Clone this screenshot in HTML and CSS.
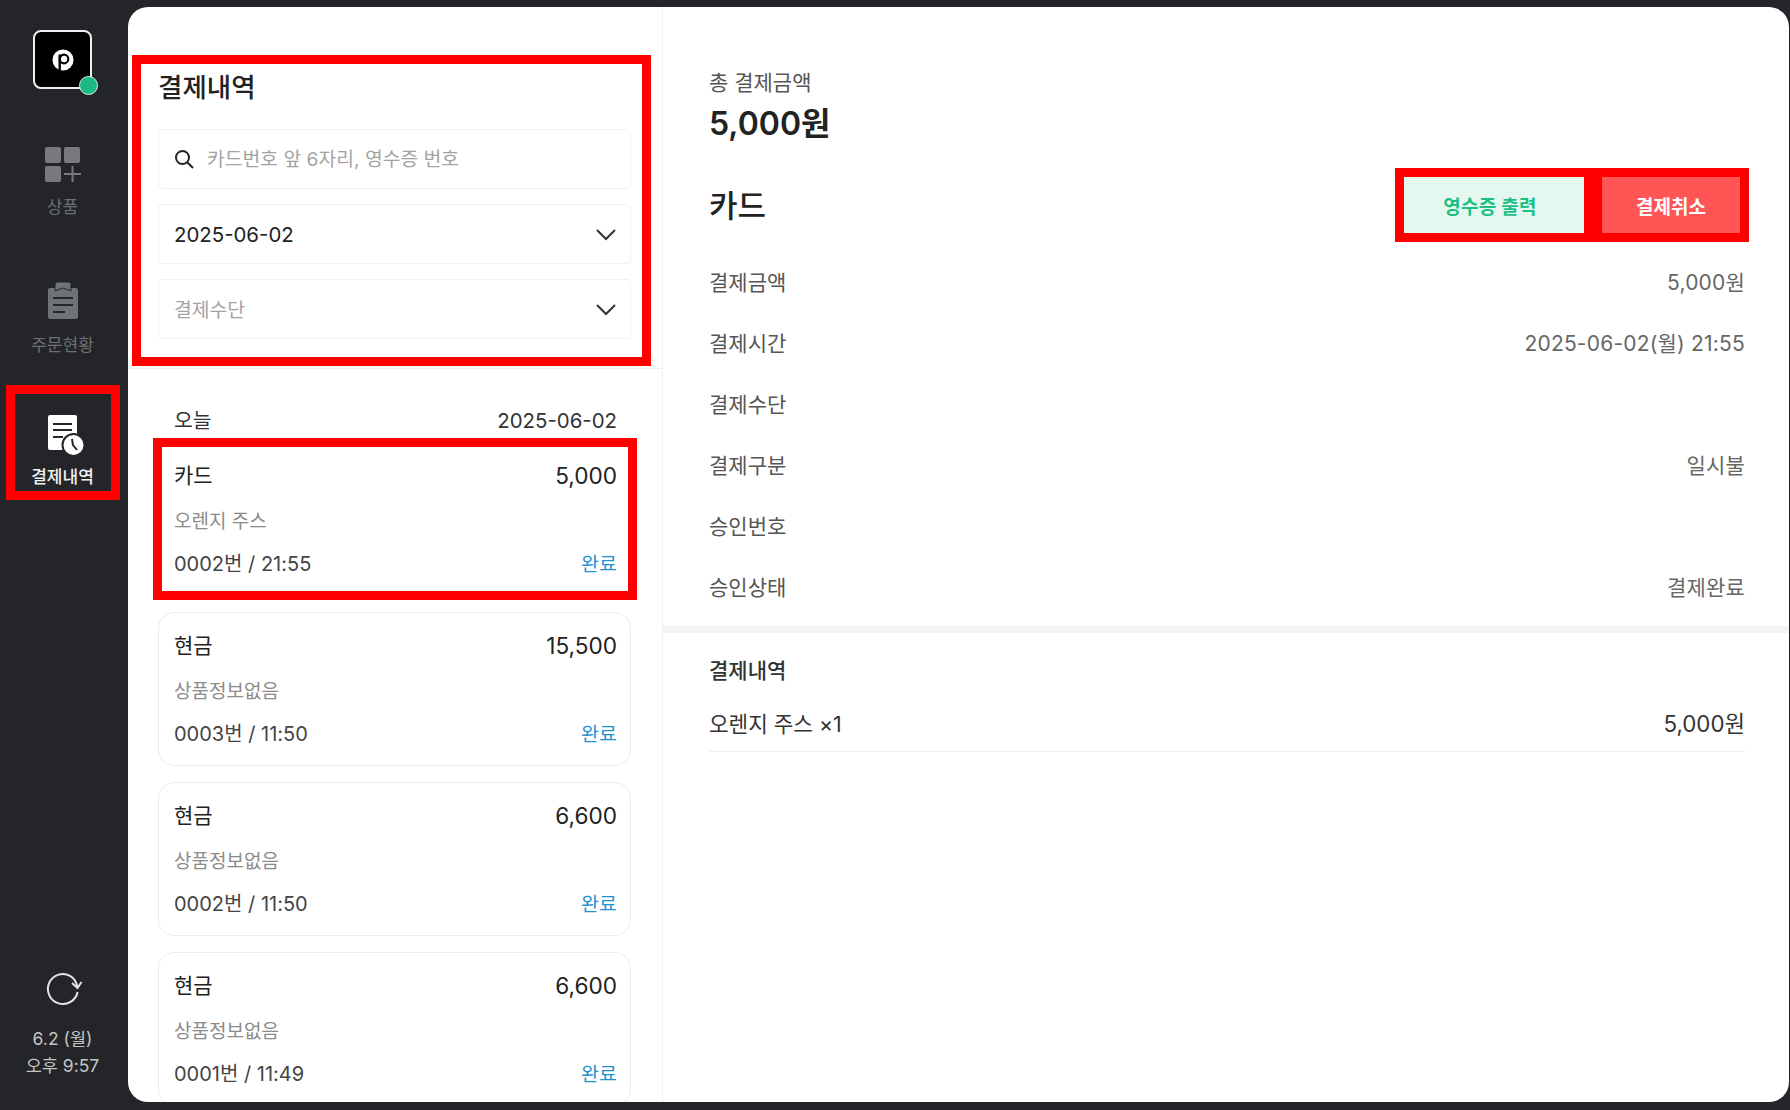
FILE: index.html
```html
<!DOCTYPE html>
<html lang="ko">
<head>
<meta charset="utf-8">
<title>결제내역</title>
<link rel="stylesheet" href="styles.css">
</head>
<body>
<div class="app">
  <aside class="sidebar">
    <div class="logo">
      <svg class="logo-mark" viewBox="0 0 24 24" width="24" height="24"><circle cx="12" cy="12" r="10.500" fill="#fff"/><circle cx="13" cy="11" r="4.300" fill="#fff" stroke="#000" stroke-width="2.200"/><path d="M8.700 6.500V24" stroke="#000" stroke-width="2.400" fill="none"/><path d="M3 24h4.500M10 24h11" stroke="#000" stroke-width="2" fill="none"/></svg>
      <span class="status-dot"></span>
    </div>
    <nav class="nav">
      <a class="nav-item nav-products">
        <svg viewBox="0 0 36 36" width="36" height="36"><rect x="0" y="0" width="16" height="16" rx="2" fill="#77797c"/><rect x="19" y="0" width="16" height="16" rx="2" fill="#77797c"/><rect x="0" y="19" width="16" height="16" rx="2" fill="#77797c"/><path d="M27.500 19v16M19 27h17" stroke="#77797c" stroke-width="2" fill="none"/></svg>
        <span class="nav-label">상품</span>
      </a>
      <a class="nav-item nav-orders">
        <svg viewBox="0 0 36 38" width="36" height="38"><path d="M5 6h26a2 2 0 0 1 2 2v27a2 2 0 0 1-2 2H5a2 2 0 0 1-2-2V8a2 2 0 0 1 2-2z" fill="#6f7276"/><path d="M10 9V2a2 2 0 0 1 2-2h12a2 2 0 0 1 2 2v7l-8-3z" fill="#6f7276" stroke="#24262a" stroke-width="1"/><path d="M8 16h20M8 23h20M8 30h12" stroke="#24262a" stroke-width="2" fill="none"/></svg>
        <span class="nav-label">주문현황</span>
      </a>
      <a class="nav-item nav-history">
        <svg viewBox="0 0 40 42" width="40" height="42"><rect x="0" y="0" width="29" height="35" rx="2" fill="#fff"/><path d="M5 9h19M5 15h19M5 22h10" stroke="#24262a" stroke-width="2" fill="none"/><circle cx="25.500" cy="30" r="11" fill="#fff" stroke="#24262a" stroke-width="2"/><path d="M24 24l1 6 4 5" stroke="#24262a" stroke-width="2" fill="none"/></svg>
        <span class="nav-label nav-label-active">결제내역</span>
      </a>
    </nav>
    <div class="side-foot">
      <svg class="refresh" viewBox="0 0 36 36" width="36" height="36"><path d="M32.600 21A15 15 0 1 1 25 4.800C29 7 31.500 11 32.500 16.500" fill="none" stroke="#e6e6e6" stroke-width="2"/><path d="M27 12l5.500 5 4-6" fill="none" stroke="#e6e6e6" stroke-width="2"/></svg>
      <div class="side-time">6.2 (월)</div>
      <div class="side-time">오후 9:57</div>
    </div>
  </aside>

  <main class="panel">
    <section class="list-col">
      <header class="list-head">
        <h1 class="list-title">결제내역</h1>
        <div class="field">
          <svg viewBox="0 0 20 20" width="20" height="20"><circle cx="8.500" cy="8.500" r="6.500" fill="none" stroke="#222" stroke-width="2"/><path d="M13.500 13.500L19 19" stroke="#222" stroke-width="2" fill="none"/></svg>
          <span class="placeholder search-text">카드번호 앞 6자리, 영수증 번호</span>
        </div>
        <div class="field field-select">
          <span class="field-value">2025-06-02</span>
          <svg viewBox="0 0 20 12" width="20" height="12"><path d="M1 1l9 9 9-9" fill="none" stroke="#333" stroke-width="2"/></svg>
        </div>
        <div class="field field-select">
          <span class="placeholder">결제수단</span>
          <svg viewBox="0 0 20 12" width="20" height="12"><path d="M1 1l9 9 9-9" fill="none" stroke="#333" stroke-width="2"/></svg>
        </div>
      </header>
      <div class="list-body">
        <div class="day-row"><span>오늘</span><span>2025-06-02</span></div>
        <article class="card card-marked">
          <div class="card-row card-top"><span>카드</span><span class="amount">5,000</span></div>
          <div class="card-sub">오렌지 주스</div>
          <div class="card-row card-bottom"><span>0002번 / 21:55</span><span class="done">완료</span></div>
        </article>
        <article class="card">
          <div class="card-row card-top"><span>현금</span><span class="amount">15,500</span></div>
          <div class="card-sub">상품정보없음</div>
          <div class="card-row card-bottom"><span>0003번 / 11:50</span><span class="done">완료</span></div>
        </article>
        <article class="card">
          <div class="card-row card-top"><span>현금</span><span class="amount">6,600</span></div>
          <div class="card-sub">상품정보없음</div>
          <div class="card-row card-bottom"><span>0002번 / 11:50</span><span class="done">완료</span></div>
        </article>
        <article class="card">
          <div class="card-row card-top"><span>현금</span><span class="amount">6,600</span></div>
          <div class="card-sub">상품정보없음</div>
          <div class="card-row card-bottom"><span>0001번 / 11:49</span><span class="done">완료</span></div>
        </article>
      </div>
    </section>

    <section class="detail">
      <div class="detail-top">
        <div class="total-label">총 결제금액</div>
        <div class="total-value">5,000원</div>
        <div class="method-row">
          <div class="method">카드</div>
          <div class="actions">
            <button class="btn btn-receipt">영수증 출력</button>
            <button class="btn btn-cancel">결제취소</button>
          </div>
        </div>
        <dl class="info">
          <div class="info-row"><dt>결제금액</dt><dd>5,000원</dd></div>
          <div class="info-row"><dt>결제시간</dt><dd>2025-06-02(월) 21:55</dd></div>
          <div class="info-row"><dt>결제수단</dt><dd></dd></div>
          <div class="info-row"><dt>결제구분</dt><dd>일시불</dd></div>
          <div class="info-row"><dt>승인번호</dt><dd></dd></div>
          <div class="info-row"><dt>승인상태</dt><dd>결제완료</dd></div>
        </dl>
      </div>
      <div class="detail-items">
        <h2 class="items-title">결제내역</h2>
        <div class="item-row"><span>오렌지 주스 ×1</span><span class="item-price">5,000원</span></div>
      </div>
    </section>
  </main>
</div>
</body>
</html>
```

FILE: styles.css
```css
*, *::before, *::after { box-sizing: border-box; }
html, body { margin: 0; padding: 0; height: 100%; }
body {
  background: #232528;
  font-family: Inter, "Noto Sans CJK KR", sans-serif;
  color: #222;
  overflow: hidden;
}
.app { display: flex; width: 1790px; height: 1110px; }

/* sidebar */
.sidebar {
  width: 128px;
  flex: none;
  display: flex;
  flex-direction: column;
  align-items: center;
  padding: 30px 3px 31px 0;
}
.logo {
  position: relative;
  width: 59px;
  height: 59px;
  background: #000;
  border: 2px solid #eee;
  border-radius: 8px;
  display: flex;
  align-items: center;
  justify-content: center;
}
.status-dot {
  position: absolute;
  right: -8px;
  bottom: -8px;
  width: 19px;
  height: 19px;
  border-radius: 50%;
  background: #1db983;
  border: 1.5px solid #d5efe6;
}
.nav { display: flex; flex-direction: column; align-items: center; }
.nav-item { display: flex; flex-direction: column; align-items: center; }
.nav-products { margin-top: 58px; }
.nav-orders { margin-top: 63px; }
.nav-history {
  margin-top: 28px;
  width: 114px;
  height: 115px;
  border: 9px solid #f00;
  padding-top: 21px;
}
.nav-label {
  font-size: 17px;
  line-height: 24px;
  color: #6d7074;
  margin-top: 12px;
}
.nav-orders .nav-label { margin-top: 13px; }
.nav-label-active { color: #f2f2f2; font-weight: 500; margin-top: 8px; white-space: nowrap; }
.nav-history svg { margin-left: 11px; height: 42px; flex: none; }
.side-foot {
  margin-top: auto;
  display: flex;
  flex-direction: column;
  align-items: center;
}
.refresh { margin-bottom: 18px; overflow: visible; }
.side-time { font-size: 17.5px; line-height: 27px; color: #c4c4c4; white-space: nowrap; }

/* panel */
.panel {
  flex: 1;
  margin: 7px 1px 8px 0;
  background: #fff;
  border-radius: 20px;
  overflow: hidden;
  display: flex;
}

/* list column */
.list-col {
  width: 535px;
  flex: none;
  border-right: 1px solid #efefef;
  display: flex;
  flex-direction: column;
}
.list-head {
  position: relative;
  padding: 65px 31px 29px 30px;
  border-bottom: 1px solid #efefef;
}
.list-head::after {
  content: "";
  position: absolute;
  left: 4px;
  top: 48px;
  width: 519px;
  height: 311px;
  border: 9px solid #f00;
}
.list-title {
  margin: 0 0 27px;
  font-size: 26.5px;
  line-height: 30px;
  font-weight: 500;
  color: #222;
}
.field {
  height: 60px;
  border: 1px solid #f1f1f1;
  border-radius: 4px;
  display: flex;
  align-items: center;
  padding: 0 14px 0 15px;
  font-size: 20.4px;
  margin-top: 15px;
}
.list-title + .field { margin-top: 0; }
.field-select { justify-content: space-between; }
.field-select svg { margin-top: 2px; }
.search-text { margin: 0 0 2px 13px; }
.placeholder { color: #a3a3a3; font-size: 19.3px; }
.field-value { color: #222; }

.list-body { padding: 38px 31px 0 30px; flex: 1; overflow: hidden; }
.day-row {
  display: flex;
  justify-content: space-between;
  padding: 0 14px 0 16px;
  font-size: 20.4px;
  line-height: 28px;
  color: #333;
}
.card {
  position: relative;
  height: 154px;
  margin-top: 16px;
  padding: 18px 13px 0 15px;
  border: 1px solid #ececec;
  border-radius: 16px;
  background: #fff;
}
.day-row + .card { margin-top: 7px; }
.card-marked { border-radius: 0; }
.card-marked::after {
  content: "";
  position: absolute;
  left: -6px;
  right: -7px;
  top: -5px;
  bottom: -5px;
  border: 9px solid #f00;
}
.card-row { display: flex; justify-content: space-between; align-items: center; }
.card-top { font-size: 21px; line-height: 30px; color: #222; }
.amount { font-size: 22.6px; }
.card-sub { margin-top: 16px; font-size: 19px; line-height: 30px; color: #8b8b8b; }
.card-bottom { margin-top: 12px; font-size: 20px; line-height: 30px; color: #444; }
.done { color: #1f93d1; font-size: 19.5px; }

/* detail */
.detail { flex: 1; display: flex; flex-direction: column; min-width: 0; }
.detail-top { padding: 62px 44px 10px 46px; }
.total-label { font-size: 21px; line-height: 28px; color: #555; }
.total-value {
  margin-top: 7px;
  font-size: 32px;
  line-height: 40px;
  font-weight: 600;
  color: #222;
}
.method-row {
  margin-top: 24px;
  margin-right: -4px;
  display: flex;
  justify-content: space-between;
  align-items: center;
}
.method { font-size: 31px; line-height: 40px; font-weight: 500; color: #222; padding-top: 1px; }
.actions {
  display: flex;
  gap: 18px;
  padding: 9px;
  background: #f00;
}
.btn {
  height: 56px;
  border: 0;
  font-family: inherit;
  font-size: 19px;
  font-weight: 700;
}
.btn-receipt { width: 180px; background: #e3f9f0; color: #1dbf84; letter-spacing: .3px; padding: 0 8px 0 0; }
.btn-cancel { width: 138px; background: #ff5555; color: #fff; }
.info { margin: 8px 0 0; }
.info-row {
  height: 61px;
  display: flex;
  justify-content: space-between;
  align-items: center;
  font-size: 21px;
  color: #555;
}
.info-row dd { margin: 0; font-size: 21px; letter-spacing: .2px; color: #666; }
.detail-items { border-top: 7px solid #f3f3f3; padding: 23px 44px 0 46px; }
.items-title { margin: 0 0 12px; font-size: 21px; line-height: 30px; font-weight: 500; color: #333; }
.item-row {
  display: flex;
  justify-content: space-between;
  padding: 13px 0 14px;
  border-bottom: 1px solid #eee;
  font-size: 21.3px;
  line-height: 26px;
  color: #333;
}
.item-price { font-size: 22.3px; }
```
